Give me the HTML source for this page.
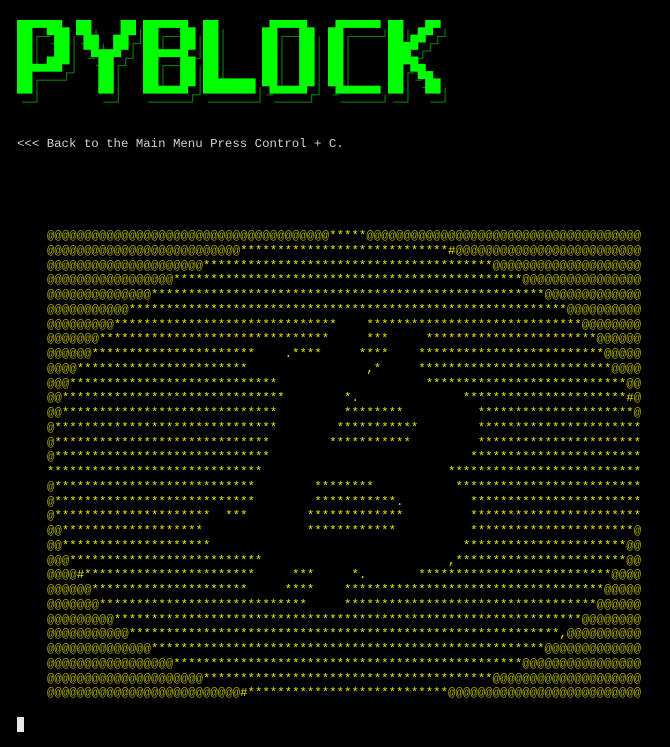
<!DOCTYPE html>
<html><head><meta charset="utf-8">
<style>
html,body{margin:0;padding:0;background:#000;width:670px;height:747px;overflow:hidden;}
body{position:relative;font-family:"Liberation Mono",monospace;}
#logo{position:absolute;left:0;top:0;}
.hdr{position:absolute;left:17px;top:137px;font-size:12.38px;line-height:15px;color:#d0d0d0;white-space:pre;}
pre{position:absolute;left:47px;top:229px;margin:0;font-family:"Liberation Mono",monospace;font-size:12.38px;line-height:14.75px;color:#e6e600;}
pre i{font-style:normal;color:#a8a800;}
.cur{position:absolute;left:17px;top:717px;width:7px;height:15px;background:#e8e8e8;}
</style></head><body>
<svg id="logo" width="470" height="120" xmlns="http://www.w3.org/2000/svg"><g id="sh"></g><g id="sh2"></g><g id="mn"></g></svg>
<div class="hdr">&lt;&lt;&lt; Back to the Main Menu Press Control + C.</div>
<pre><i>@@@@@@@@@@@@@@@@@@@@@@@@@@@@@@@@@@@@@@</i>*****<i>@@@@@@@@@@@@@@@@@@@@@@@@@@@@@@@@@@@@@</i>
<i>@@@@@@@@@@@@@@@@@@@@@@@@@@</i>****************************#<i>@@@@@@@@@@@@@@@@@@@@@@@@@</i>
<i>@@@@@@@@@@@@@@@@@@@@@</i>***************************************<i>@@@@@@@@@@@@@@@@@@@@</i>
<i>@@@@@@@@@@@@@@@@@</i>***********************************************<i>@@@@@@@@@@@@@@@@</i>
<i>@@@@@@@@@@@@@@</i>*****************************************************<i>@@@@@@@@@@@@@</i>
<i>@@@@@@@@@@@</i>***********************************************************<i>@@@@@@@@@@</i>
<i>@@@@@@@@@</i>******************************    *****************************<i>@@@@@@@@</i>
<i>@@@@@@@</i>*******************************     ***     ***********************<i>@@@@@@</i>
<i>@@@@@@</i>**********************    .****     ****    *************************<i>@@@@@</i>
<i>@@@@</i>***********************                ,*     **************************<i>@@@@</i>
<i>@@@</i>****************************                    ***************************<i>@@</i>
<i>@@</i>******************************        *.              **********************#<i>@</i>
<i>@@</i>*****************************         ********          *********************<i>@</i>
<i>@</i>******************************        ***********        **********************
<i>@</i>*****************************        ***********         **********************
<i>@</i>*****************************                           ***********************
*****************************                         **************************
<i>@</i>***************************        ********           *************************
<i>@</i>***************************        ***********.         ***********************
<i>@</i>*********************  ***        *************         ***********************
<i>@@</i>*******************              ************          **********************<i>@</i>
<i>@@</i>********************                                  **********************<i>@@</i>
<i>@@@</i>**************************                         ,***********************<i>@@</i>
<i>@@@@</i>#***********************     ***     *.       **************************<i>@@@@</i>
<i>@@@@@@</i>*********************     ****    ***********************************<i>@@@@@</i>
<i>@@@@@@@</i>****************************     **********************************<i>@@@@@@</i>
<i>@@@@@@@@@</i>***************************************************************<i>@@@@@@@@</i>
<i>@@@@@@@@@@@</i>**********************************************************,<i>@@@@@@@@@@</i>
<i>@@@@@@@@@@@@@@</i>*****************************************************<i>@@@@@@@@@@@@@</i>
<i>@@@@@@@@@@@@@@@@@</i>***********************************************<i>@@@@@@@@@@@@@@@@</i>
<i>@@@@@@@@@@@@@@@@@@@@@</i>***************************************<i>@@@@@@@@@@@@@@@@@@@@</i>
<i>@@@@@@@@@@@@@@@@@@@@@@@@@@</i>#***************************<i>@@@@@@@@@@@@@@@@@@@@@@@@@@</i></pre>
<div class="cur"></div>
<script>
(function(){
var L={
P:["111111.","11..111","11...11","11...11","11...11","11..111","111111.","11.....","11.....","11....."],
Y:["11....11","11....11",".11..11.",".11..11.","..1111..","...11...","...11...","...11...","...11...","...11..."],
B:["111111.","11...11","11...11","11...11","111111.","11...11","11...11","11...11","11...11","111111."],
L:["11.....","11.....","11.....","11.....","11.....","11.....","11.....","11.....","1111111","1111111"],
O:[".11111.","11...11","11...11","11...11","11...11","11...11","11...11","11...11","11...11",".11111."],
C:[".111111","11.....","11.....","11.....","11.....","11.....","11.....","11.....","11.....",".111111"],
K:["11...11","11..11.","11.11..","1111...","111....","1111...","11.11..","11..11.","11...11","11...11"]};
var order=[["P",17],["Y",76],["B",143],["L",203],["O",262],["C",328],["K",388]];
var u=7.43,v=7.3,y0=20;
var sh=document.getElementById("sh"),sh2=document.getElementById("sh2"),mn=document.getElementById("mn"),NS="http://www.w3.org/2000/svg";
function r(g,x,y,w,h,c){var e=document.createElementNS(NS,"rect");e.setAttribute("x",x);e.setAttribute("y",y);e.setAttribute("width",w);e.setAttribute("height",h);e.setAttribute("fill",c);g.appendChild(e);}
order.forEach(function(o){var g=L[o[0]],x0=o[1];
for(var i=0;i<g.length;i++)for(var j=0;j<g[i].length;j++)if(g[i][j]=="1"){
var x=x0+j*u,y=y0+i*v;
r(sh,x+5,y+9,u+0.6,v+0.6,"#0a8a0a");
r(sh2,x+4,y+8,u+0.6,v+0.6,"#000");
r(mn,x,y,u+0.6,v+0.6,"#00ff00");}});
})();
</script>
</body></html>
